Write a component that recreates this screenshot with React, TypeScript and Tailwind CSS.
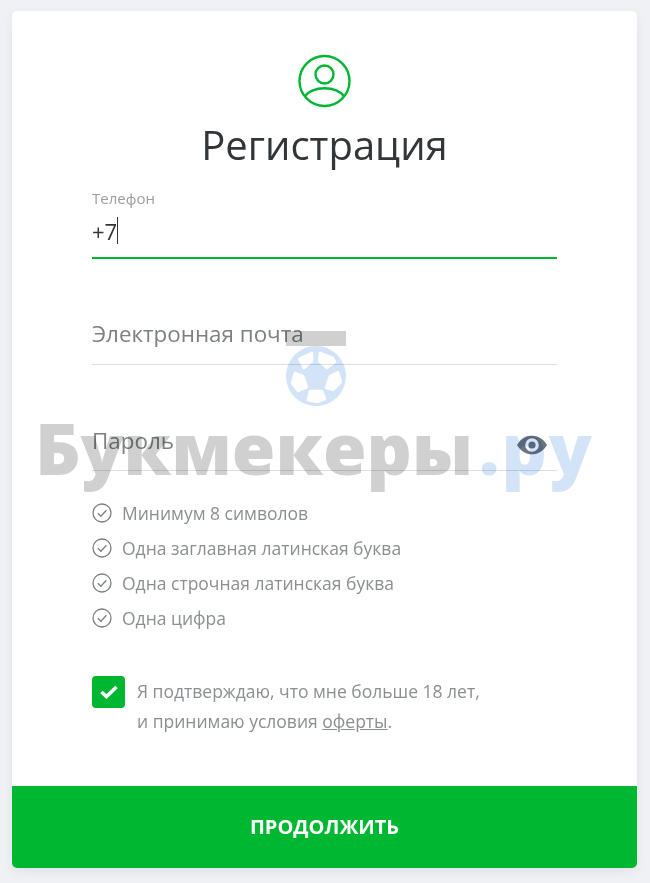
const requirements = [
  "Минимум 8 символов",
  "Одна заглавная латинская буква",
  "Одна строчная латинская буква",
  "Одна цифра",
];

function UserIcon() {
  return (
    <svg width="54" height="54" viewBox="0 0 54 54" fill="none" stroke="#00b731" strokeWidth="2.4" aria-hidden="true">
      <circle cx="26.5" cy="27" r="25" />
      <circle cx="26.5" cy="20.5" r="9" />
      <path d="M6.5 42.5C11 37 18 34.3 26.5 34.3C35 34.3 42 37 46.5 42.5" />
    </svg>
  );
}

function CheckCircle() {
  return (
    <svg width="20" height="20" viewBox="0 0 20 20" fill="none" stroke="#7b7f82" strokeWidth="1.3" aria-hidden="true">
      <circle cx="10" cy="10" r="9" />
      <path d="M5.8 10.2L8.9 13.2L14.4 7.2" />
    </svg>
  );
}

function EyeIcon() {
  return (
    <svg width="32" height="20" viewBox="0 0 32 20" aria-hidden="true">
      <path fillRule="evenodd" fill="#6a7480" d="M1 10C5 3.5 10 .7 16 .7S27 3.5 31 10C27 16.5 22 19.3 16 19.3S5 16.5 1 10ZM16 3.2A6.8 6.8 0 1 0 16 16.8A6.8 6.8 0 1 0 16 3.2Z" />
      <circle cx="16" cy="10" r="3.6" fill="#6a7480" />
    </svg>
  );
}

function Ball() {
  return (
    <svg width="60" height="60" viewBox="0 0 60 60" aria-hidden="true">
      <circle cx="30" cy="30" r="30" fill="#d3e3f8" />
      <g fill="#ffffff" stroke="#ffffff" strokeWidth="2.5" strokeLinejoin="round">
        <path d="M13 13L26 7L26 15L18 22Z" />
        <path d="M34 7L47 12L49 16L41 22L33 15Z" />
        <path d="M9 27L17 30L21 41L12 45L6 37Z" />
        <path d="M52 26L55 36L47 44L40 42L44 30Z" />
        <path d="M24 45L36 45L39 53L31 56L22 54Z" />
      </g>
    </svg>
  );
}

function Watermark() {
  return (
    <div className="absolute left-0 top-0 w-[650px] h-[540px] pointer-events-none mix-blend-multiply">
      <div className="absolute left-[286px] top-[331px] w-[60px] h-[15px] bg-[#d0d0d0]" />
      <div className="absolute left-[286px] top-[346px]">
        <Ball />
      </div>
      <div className="absolute left-[35px] top-[399px] text-[70.5px] leading-[98px] font-extrabold whitespace-nowrap text-[#d0d0d0]">
        Букмекеры<span className="ml-[6px] tracking-[2px] text-[#d3e3f8]">.ру</span>
      </div>
    </div>
  );
}

export default function App() {
  return (
    <div className="relative min-h-[883px] bg-[#eff1f5] px-3 pt-[11px] font-['Open_Sans',sans-serif]">
      <div className="flex h-[857px] w-[625px] flex-col overflow-hidden rounded-[5px] bg-white shadow-[0_4px_12px_rgba(0,0,0,0.06)]">
        <div className="flex flex-col items-center pt-[43px]">
          <UserIcon />
          <h1 className="mt-[11px] text-[40px] leading-[52px] text-[#333638]">Регистрация</h1>
        </div>

        <div className="flex flex-1 flex-col px-[80px] pt-[18px]">
          <div className="flex h-[70px] flex-col border-b-2 border-[#00b731]">
            <label className="text-[15px] leading-[18px] text-[#9a9da0]">Телефон</label>
            <div className="mt-[7px] flex h-[33px] items-center text-[22px] leading-[30px] text-[#333638]">
              +7<span className="h-[27px] w-px bg-[#333638]" />
            </div>
          </div>

          <div className="flex h-[106px] items-end border-b border-[#dcdee0] pb-[15px] text-[22.4px] leading-[30px] text-[#7c8083]">
            Электронная почта
          </div>

          <div className="flex h-[106px] items-end justify-between border-b border-[#dcdee0] pb-[14px] text-[22.4px] leading-[30px] text-[#7c8083]">
            <span>Пароль</span>
            <span className="mb-[1px] mr-[9px]">
              <EyeIcon />
            </span>
          </div>

          <ul className="mt-[30px] flex flex-col gap-[11px]">
            {requirements.map((item) => (
              <li key={item} className="flex h-6 items-center gap-[10px] text-[17.5px] text-[#8b8f92]">
                <CheckCircle />
                <span>{item}</span>
              </li>
            ))}
          </ul>

          <div className="mt-[46px] flex gap-3">
            <span className="flex h-[32px] w-[33px] items-center justify-center rounded-[4px] bg-[#00b731]">
              <svg width="18" height="14" viewBox="0 0 18 14" fill="none" stroke="#ffffff" strokeWidth="3.6" aria-hidden="true">
                <path d="M1.5 7L6.5 11.5L16.5 2" />
              </svg>
            </span>
            <p className="text-[17.5px] leading-[30px] text-[#8b8f92]">
              Я подтверждаю, что мне больше 18 лет,
              <br />и принимаю условия <span className="underline">оферты</span>.
            </p>
          </div>
        </div>

        <button className="h-[82px] w-full bg-[#00b731] text-[20px] font-bold text-white">
          ПРОДОЛЖИТЬ
        </button>
      </div>
      <Watermark />
    </div>
  );
}
